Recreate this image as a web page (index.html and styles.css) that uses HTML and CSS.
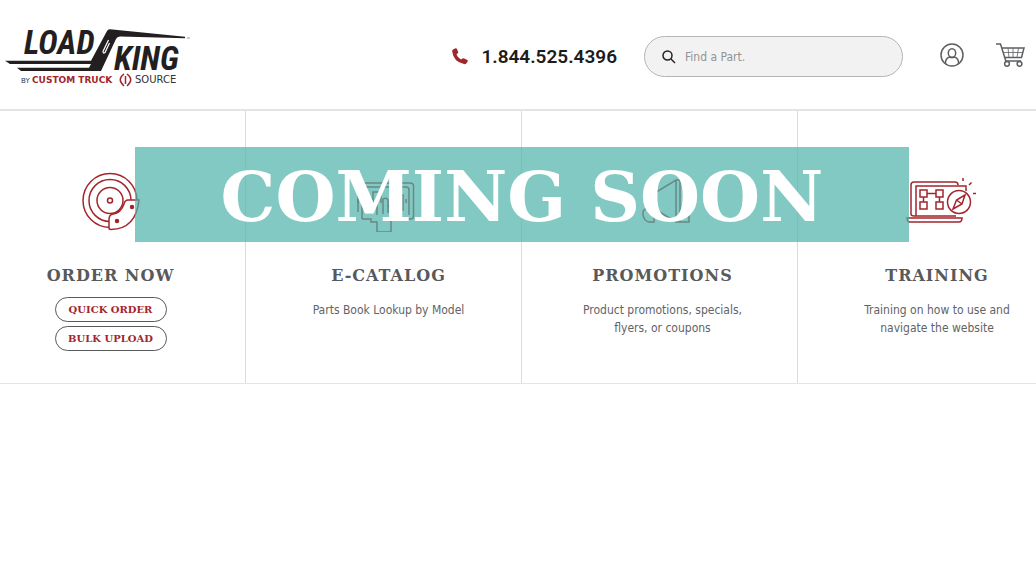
FILE: index.html
```html
<!DOCTYPE html>
<html lang="en">
<head>
<meta charset="utf-8">
<meta name="viewport" content="width=device-width, initial-scale=1">
<title>Load King Parts</title>
<link rel="stylesheet" href="styles.css">
</head>
<body>
<header class="header">
  <a class="logo" href="#" aria-label="Load King home">
    <svg width="200" height="75" viewBox="0 20 200 75">
      <path fill="#231f20" d="M5 61.700H91L107 32Q108 30 110 30.200L185 37.700V39.300L120 37.500Q117 37.500 116 40L101 72H21L17 68.700H89L91 65H10Z"/>
      <path d="M108.500 41L103 52.500Q103 55 105 53.500L109.500 44" fill="none" stroke="#fff" stroke-width="1.200"/>
      <path d="M187 39H190" stroke="#999"/>
      <text class="logo-word" x="24" y="55">LOAD</text>
      <text class="logo-word" x="114" y="71">KING</text>
      <text class="logo-by" x="21" y="84">BY</text>
      <text class="logo-custom" x="32" y="84">CUSTOM TRUCK</text>
      <path d="M124 75Q116.500 80.500 124 87M127 75Q134.500 80.500 127 87M125.500 77V85" fill="none" stroke="#a3252c" stroke-width="1.500"/>
      <text class="logo-source" x="135" y="84">SOURCE</text>
    </svg>
  </a>
  <a class="phone" href="tel:18445254396">
    <svg width="16" height="17" viewBox="0 0 16 17"><path fill="#a3252c" d="M1 1.500L3.500.300Q4.500 0 5 1L6.200 4Q6.300 5 5.500 5.600L4.500 6.500Q5.500 9.700 9 11.500L10.500 10.600Q11.300 10 12.200 10.400L15.300 12Q16.200 12.700 15.500 13.700L14 15.700Q13.300 16.300 12 16.100Q1.500 13.800.200 3.500Q0 2.200 1 1.500Z"/></svg>
    <span>1.844.525.4396</span>
  </a>
  <form class="search">
    <svg width="14" height="14" viewBox="0 0 14 14" fill="none" stroke="#222" stroke-width="1.500"><circle cx="5.500" cy="5.500" r="4.500"/><path d="M9 9L13 13"/></svg>
    <input type="search" aria-label="Find a part" placeholder="Find a Part.">
  </form>
  <nav class="actions">
    <a href="#" aria-label="Account"><svg width="24" height="24" viewBox="0 0 24 24" fill="none" stroke="#5e5f61" stroke-width="1.500"><circle cx="12" cy="12" r="11"/><ellipse cx="12" cy="10" rx="3.700" ry="4.300"/><path d="M5.500 20.500V19Q6 15 9.800 14Q12 15.500 14.200 14Q18 15 18.500 19V20.500"/></svg></a>
    <a href="#" aria-label="Cart"><svg width="29" height="24" viewBox="0 0 29 24" fill="none" stroke="#5e5f61" stroke-width="1.500"><path d="M0 1H4.500L10 18.500M6 5H28L25.500 14.500H9M9 18H25"/><path stroke-width=".800" d="M7 9.500H26.500M12 5L13 14.500M17 5V14.500M22.500 5L21 14.500"/><circle cx="11" cy="20.800" r="2.400"/><circle cx="23.500" cy="20.800" r="2.400"/></svg></a>
  </nav>
</header>
<main class="tiles">
  <section class="tile tile-order">
    <svg class="icon" width="58" height="60" viewBox="0 0 58 60"><circle cx="28" cy="28.500" r="27"/><circle cx="28" cy="28.500" r="21"/><circle cx="28" cy="28.500" r="13"/><circle cx="28" cy="28.500" r="2.500"/><path fill="#fff" d="M57 28H46Q43 28 42 32Q39 41 31 42Q27 43 27 47V56Q27 57.500 29 57.500Q54 57 57 28Z"/><circle class="dot" cx="50" cy="35" r="1.500"/><circle class="dot" cx="35" cy="49" r="1.500"/></svg>
    <h2>ORDER NOW</h2>
    <div class="buttons"><button type="button">QUICK ORDER</button><button type="button">BULK UPLOAD</button></div>
  </section>
  <section class="tile tile-catalog">
    <svg class="icon" width="60" height="60" viewBox="0 0 60 60"><path d="M2 40V14Q2 11 5 11H54Q57.500 11 57.500 14V44Q57.500 47 54 47H35"/><path d="M6 47V18Q6 15 9 15H50Q53 15 53 18V43M2 27V31M6 47H15V50H21V60H35V43M17 35V20H25V31M21 24V43M27 42V27Q30 25 32 28V41M32 35Q35 32 37 35V40M40 23H47V38H41M50 27V31"/></svg>
    <h2>E-CATALOG</h2>
    <p>Parts Book Lookup by Model</p>
  </section>
  <section class="tile tile-promotions">
    <svg class="icon" width="52" height="60" viewBox="0 0 52 60"><path d="M13 22L36 8V50L13 36ZM36 8H40V50H36M13 22Q8 21 8 29Q8 36 13 36M8 36Q2 37 3 43Q4 49 9 50H14V37M42 40L49 43V50H40M42 14Q47 19 47 29"/></svg>
    <h2>PROMOTIONS</h2>
    <p>Product promotions, specials,<br>flyers, or coupons</p>
  </section>
  <section class="tile tile-training">
    <svg class="icon" width="72" height="60" viewBox="0 0 72 60"><path d="M52 13Q52 10 49 10H8Q5 10 5 13V42Q5 44 8 44H50M10 44V14H60V19M1 46H56Q56 50 53 50H4Q1 50 1 46ZM14 18H21V25H14ZM30 18H37V25H30ZM14 30H21V37H14ZM30 30H37V37H30ZM21 21.500H30M17.500 25V30M33.500 25V30"/><circle cx="53" cy="30" r="11.500" fill="#fff"/><path d="M59 23L56 32L47 37L50.500 28ZM50.500 28L56 32M57 9V6M63 13L65.500 10.500M67 21.500H70"/></svg>
    <h2>TRAINING</h2>
    <p>Training on how to use and<br>navigate the website</p>
  </section>
  <div class="banner">COMING SOON</div>
</main>
</body>
</html>
```
FILE: styles.css
```css
* { box-sizing: border-box; }

body {
  margin: 0;
  background: #fff;
  color: #626366;
  font-family: "DejaVu Sans Condensed", "Open Sans", sans-serif;
  font-size: 12px;
  line-height: 18px;
}

a { color: inherit; text-decoration: none; }
svg { display: block; }

.header {
  display: flex;
  align-items: center;
  padding: 19px 11px 15px 0;
  border-bottom: 2px solid #e4e4e4;
}

.logo-word {
  font: italic 700 33px "Roboto Condensed", "Liberation Sans Narrow", "Liberation Sans", sans-serif;
  fill: #231f20;
}

.logo-by, .logo-custom, .logo-source { font: 9px "DejaVu Sans", sans-serif; fill: #333; }
.logo-by { font-size: 7px; }
.logo-custom { font-weight: 700; fill: #a3252c; }
.logo-source { font-size: 10px; }

.phone {
  display: flex;
  align-items: center;
  gap: 13px;
  margin-left: auto;
  color: #1c1c1c;
  font: 600 19px/24px Roboto, sans-serif;
}

.search {
  display: flex;
  align-items: center;
  gap: 9px;
  width: 259px;
  height: 41px;
  margin: 0 37px 0 27px;
  padding: 0 17px;
  border: 1px solid #b5b5b5;
  border-radius: 21px;
  background: #f2f2f2;
}

.search input {
  flex: 1;
  min-width: 0;
  padding: 0;
  border: 0;
  outline: 0;
  background: transparent;
  font: inherit;
}

.search input::placeholder { color: #929292; opacity: 1; }

.actions { display: flex; gap: 32px; padding-bottom: 3px; }

.tiles {
  position: relative;
  display: grid;
  grid-template-columns: 246fr 276fr 276fr 238fr;
  border-bottom: 1px solid #e4e4e4;
}

.tile {
  display: flex;
  flex-direction: column;
  align-items: center;
  padding: 61px 0 32px;
  border-right: 1px solid #dcdcdc;
  text-align: center;
}

.tile-order { padding-right: 24px; }
.tile-catalog { padding-left: 10px; }
.tile-promotions { padding-left: 6px; }
.tile-training { padding-left: 40px; border-right: 0; }

.icon {
  fill: none;
  stroke: #a3252c;
  stroke-width: 1.5px;
}

.tile-catalog .icon { margin-right: 6px; }
.tile-promotions .icon { margin-left: 6px; }
.tile-training .icon { margin-left: 10px; }

.dot { fill: #a3252c; }

h2 {
  margin: 32px 0 9px;
  color: #58595b;
  font: 700 16px/24px "DejaVu Serif", serif;
  letter-spacing: 1px;
}

p { margin: 4px 0 0; }

.buttons { display: grid; gap: 4px; }

button {
  width: 112px;
  height: 25px;
  padding: 0;
  border: 1px solid #58595b;
  border-radius: 13px;
  background: #fff;
  color: #a3252c;
  font: 700 10px/16px "DejaVu Serif", serif;
}

.banner {
  position: absolute;
  top: 36px;
  right: 12.25%;
  left: 13%;
  height: 95px;
  padding-top: 2px;
  background: rgba(79, 178, 169, .7);
  color: #fff;
  font: 700 69px/95px "DejaVu Serif", serif;
  text-align: center;
  white-space: nowrap;
}
```
